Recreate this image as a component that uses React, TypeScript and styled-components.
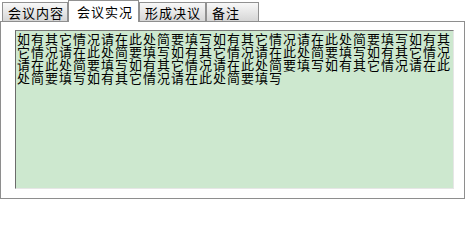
import styled, { createGlobalStyle } from 'styled-components';

const tabs = [
  { label: '会议内容', width: 66 },
  { label: '会议实况', width: 71 },
  { label: '形成决议', width: 67 },
  { label: '备注', width: 53 },
];

const note = '如有其它情况请在此处简要填写'.repeat(8);

export default function App() {
  const active = 1;

  return (
    <>
      <GlobalStyle />
      <Wrapper>
        <TabBar>
          {tabs.map((tab, i) => (
            <Tab key={tab.label} $width={tab.width} $active={i === active}>
              {tab.label}
            </Tab>
          ))}
        </TabBar>
        <Panel>
          <Field>{note}</Field>
        </Panel>
      </Wrapper>
    </>
  );
}

const GlobalStyle = createGlobalStyle`
  html, body {
    margin: 0;
    height: 200px;
    overflow: hidden;
    background: #ffffff;
    font-family: 'Noto Sans CJK SC', 'Liberation Sans', sans-serif;
  }
`;

const Wrapper = styled.div`
  width: 465px;
  height: 200px;
  overflow: hidden;
`;

const TabBar = styled.div`
  height: 21px;
  padding-left: 2px;
  display: flex;
  align-items: flex-end;
`;

const Tab = styled.div<{ $width: number; $active: boolean }>`
  box-sizing: border-box;
  width: ${(props) => props.$width}px;
  height: ${(props) => (props.$active ? '22px' : '19px')};
  margin-bottom: ${(props) => (props.$active ? '-1px' : '0')};
  padding: ${(props) => (props.$active ? '3px 0 0 8px' : '2px 0 0 5px')};
  position: relative;
  z-index: ${(props) => (props.$active ? 1 : 0)};

  border: 1px solid #919191;
  border-bottom: none;
  background: ${(props) =>
    props.$active ? '#ffffff' : 'linear-gradient(#f8f8f8, #d6d6d6)'};

  font-size: 13px;
  letter-spacing: 1px;
  line-height: 15px;
  color: #000000;
  white-space: nowrap;
`;

const Panel = styled.div`
  box-sizing: border-box;
  width: 465px;
  height: 178px;
  padding: 8px 10px 9px 14px;
  border: 1px solid #8e8e8e;
  background: #ffffff;
`;

const Field = styled.div`
  box-sizing: border-box;
  width: 439px;
  height: 159px;
  padding: 1px 0 0 1px;

  border: 1px solid;
  border-color: #7a7a7a #e6e6e6 #e6e6e6 #6c6c6c;
  background: #cde8cf;

  font-size: 13px;
  letter-spacing: 1px;
  line-height: 13px;
  color: #000000;
  word-break: break-all;
  overflow: hidden;
`;
